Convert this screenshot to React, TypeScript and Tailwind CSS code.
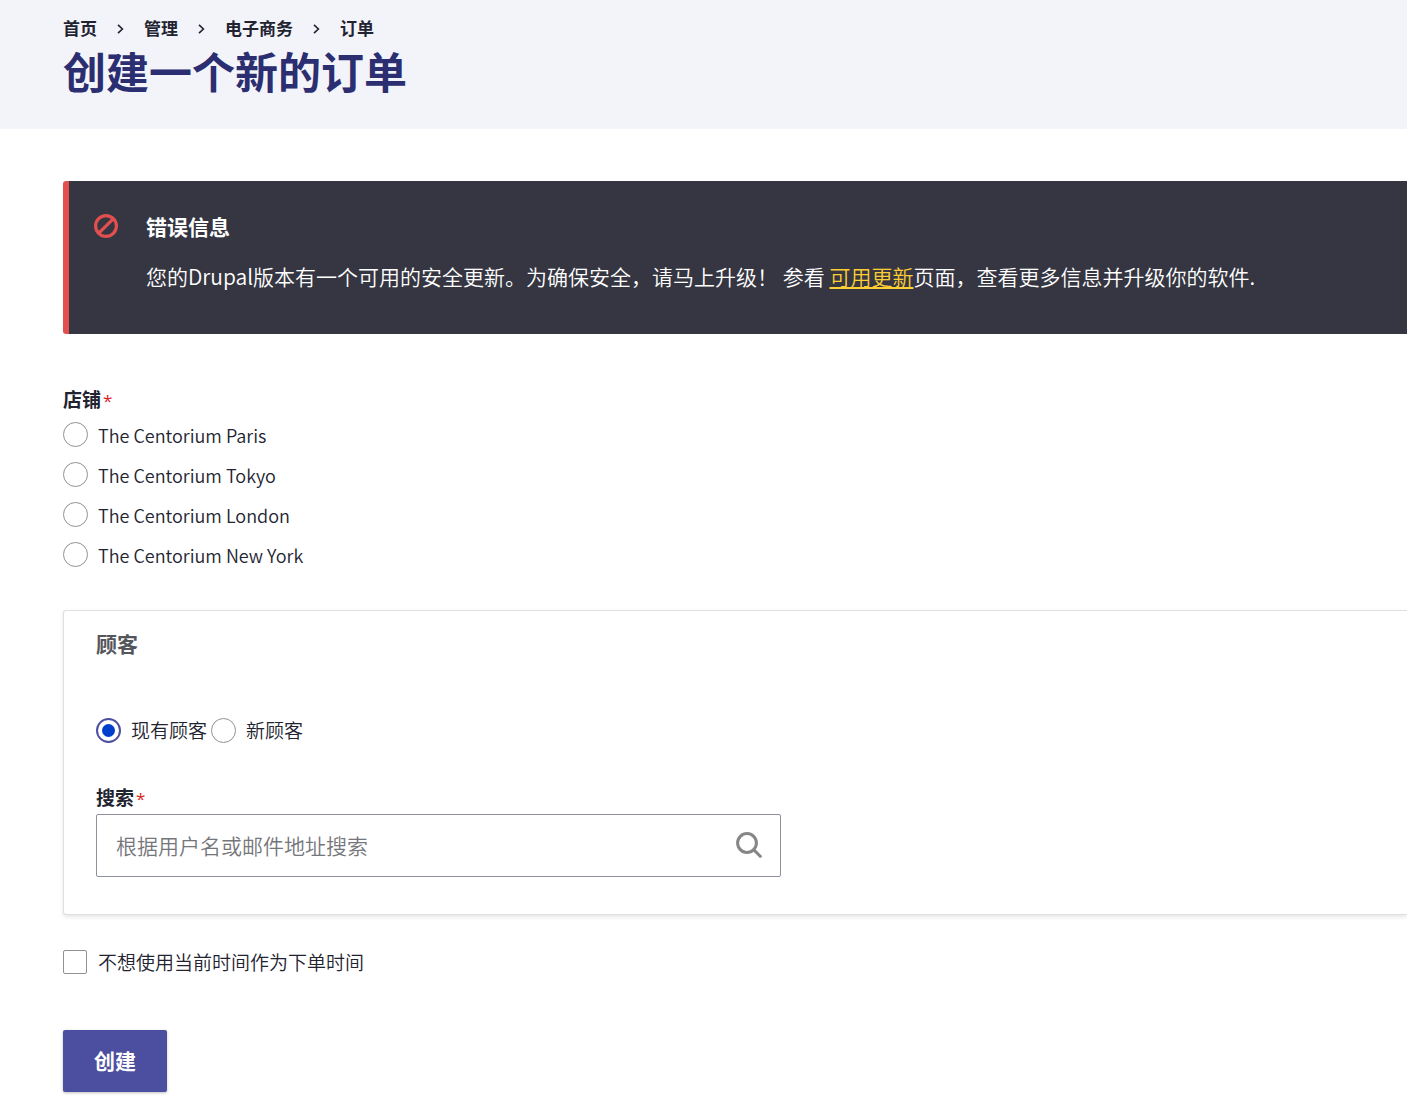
import { useState } from "react";

const breadcrumbs = ["首页", "管理", "电子商务", "订单"];
const stores = ["Paris", "Tokyo", "London", "New York"];

const radioClass =
  "size-[25px] shrink-0 appearance-none rounded-full border border-[#919297] bg-white bg-clip-content p-1 checked:border-2 checked:border-[#4c4e9f] checked:bg-[#003ecc]";
const optionText = "font-['Noto_Sans_CJK_SC',sans-serif] font-[350]";

function Breadcrumb() {
  return (
    <nav aria-label="Breadcrumb">
      <ol className="flex items-center text-[17px] leading-6 font-bold">
        {breadcrumbs.map((item, i) => (
          <li key={item} className="flex items-center">
            {i > 0 && (
              <svg className="mx-5 h-[10px] w-[7px]" viewBox="0 0 7 10" fill="none" stroke="#222330" strokeWidth="1.6" aria-hidden="true">
                <path d="M1 .8 5.4 5 1 9.2" />
              </svg>
            )}
            <a href="#">{item}</a>
          </li>
        ))}
      </ol>
    </nav>
  );
}

function ErrorMessage() {
  return (
    <section role="alert" className="flex rounded-l-[3px] border-l-[6px] border-[#e34f4f] bg-[#353641] px-6 pt-8 pb-[42px] text-white">
      <svg className="mr-[27px] size-[26px] shrink-0" viewBox="0 0 26 26" fill="none" stroke="#e34f4f" strokeWidth="3.2" aria-hidden="true">
        <circle cx="13" cy="13" r="10.4" />
        <path d="M5.8 20.2 20.2 5.8" />
      </svg>
      <div className="text-[21px]">
        <h2 className="leading-7 font-bold">错误信息</h2>
        <p className="mt-[19px] font-['Noto_Sans_CJK_SC',sans-serif] leading-8 font-[350]">
          您的Drupal版本有一个可用的安全更新。为确保安全，请马上升级！ 参看{" "}
          <a href="#" className="text-[#fdcf33] underline decoration-2 underline-offset-2">可用更新</a>
          页面，查看更多信息并升级你的软件.
        </p>
      </div>
    </section>
  );
}

function Required() {
  return <span className="ml-[2px] text-[17px] font-medium text-[#dc2323]">*</span>;
}

export default function App() {
  const [store, setStore] = useState("");
  const [customer, setCustomer] = useState("existing");

  return (
    <div className="min-h-screen overflow-x-hidden bg-white font-['Open_Sans','Noto_Sans_CJK_SC',sans-serif] text-[#222330]">
      <header className="bg-[#f3f4f9] pt-[17px] pb-7 pl-[63px]">
        <Breadcrumb />
        <h1 className="mt-1 text-[43px] leading-14 font-bold text-[#2b2e70]">创建一个新的订单</h1>
      </header>

      <main className="pt-[52px] pb-4 pl-[63px]">
        <ErrorMessage />

        <form onSubmit={(e) => e.preventDefault()} className="mt-[52px] text-[19px] leading-7">
          <fieldset>
            <legend className="font-bold">店铺<Required /></legend>
            <div className="mt-[3px]">
              {stores.map((name) => (
                <label key={name} className="flex h-10 items-start gap-[10px]">
                  <input type="radio" name="store" className={radioClass + " mt-1"} checked={store === name} onChange={() => setStore(name)} />
                  <span className={optionText + " mt-[3px] text-[18px]"}>The Centorium {name}</span>
                </label>
              ))}
            </div>
          </fieldset>

          <section className="mt-8 rounded-l-[3px] border border-r-0 border-[#dedfe4] px-8 pt-[19px] pb-[37px] shadow-[0_2px_4px_rgba(0,0,0,0.1)]">
            <h2 className="text-[21px] leading-7 font-bold text-[#55565b]">顾客</h2>
            <div className={optionText + " mt-[58px] flex items-center gap-1"}>
              <label className="flex items-center gap-[10px]">
                <input type="radio" name="customer" className={radioClass} checked={customer === "existing"} onChange={() => setCustomer("existing")} />
                现有顾客
              </label>
              <label className="flex items-center gap-[10px]">
                <input type="radio" name="customer" className={radioClass} checked={customer === "new"} onChange={() => setCustomer("new")} />
                新顾客
              </label>
            </div>
            <label htmlFor="search" className="mt-10 block font-bold">搜索<Required /></label>
            <div className="relative mt-px max-w-[685px]">
              <input
                id="search"
                type="text"
                placeholder="根据用户名或邮件地址搜索"
                className="block h-[63px] w-full rounded-[2px] border border-[#8e929c] pr-14 pl-[19px] text-[21px] font-[350] placeholder:text-[#75767b]"
              />
              <svg className="absolute top-[17px] right-[18px] size-7" viewBox="0 0 28 28" fill="none" stroke="#868686" strokeWidth="3" aria-hidden="true">
                <circle cx="12" cy="12" r="9.4" />
                <path d="m18.4 18.4 7.8 7.8" />
              </svg>
            </div>
          </section>

          <label className={optionText + " mt-[33px] flex items-center gap-[11px]"}>
            <input type="checkbox" className="size-6 appearance-none rounded-[2px] border border-[#919297] bg-white checked:bg-[#003ecc]" />
            不想使用当前时间作为下单时间
          </label>

          <button type="submit" className="mt-[54px] block rounded-[2px] bg-[#4c4e9f] px-[31px] py-[17px] text-[21px] leading-7 font-bold text-white shadow-[0_1px_3px_rgba(0,0,0,0.25)]">
            创建
          </button>
        </form>
      </main>
    </div>
  );
}
